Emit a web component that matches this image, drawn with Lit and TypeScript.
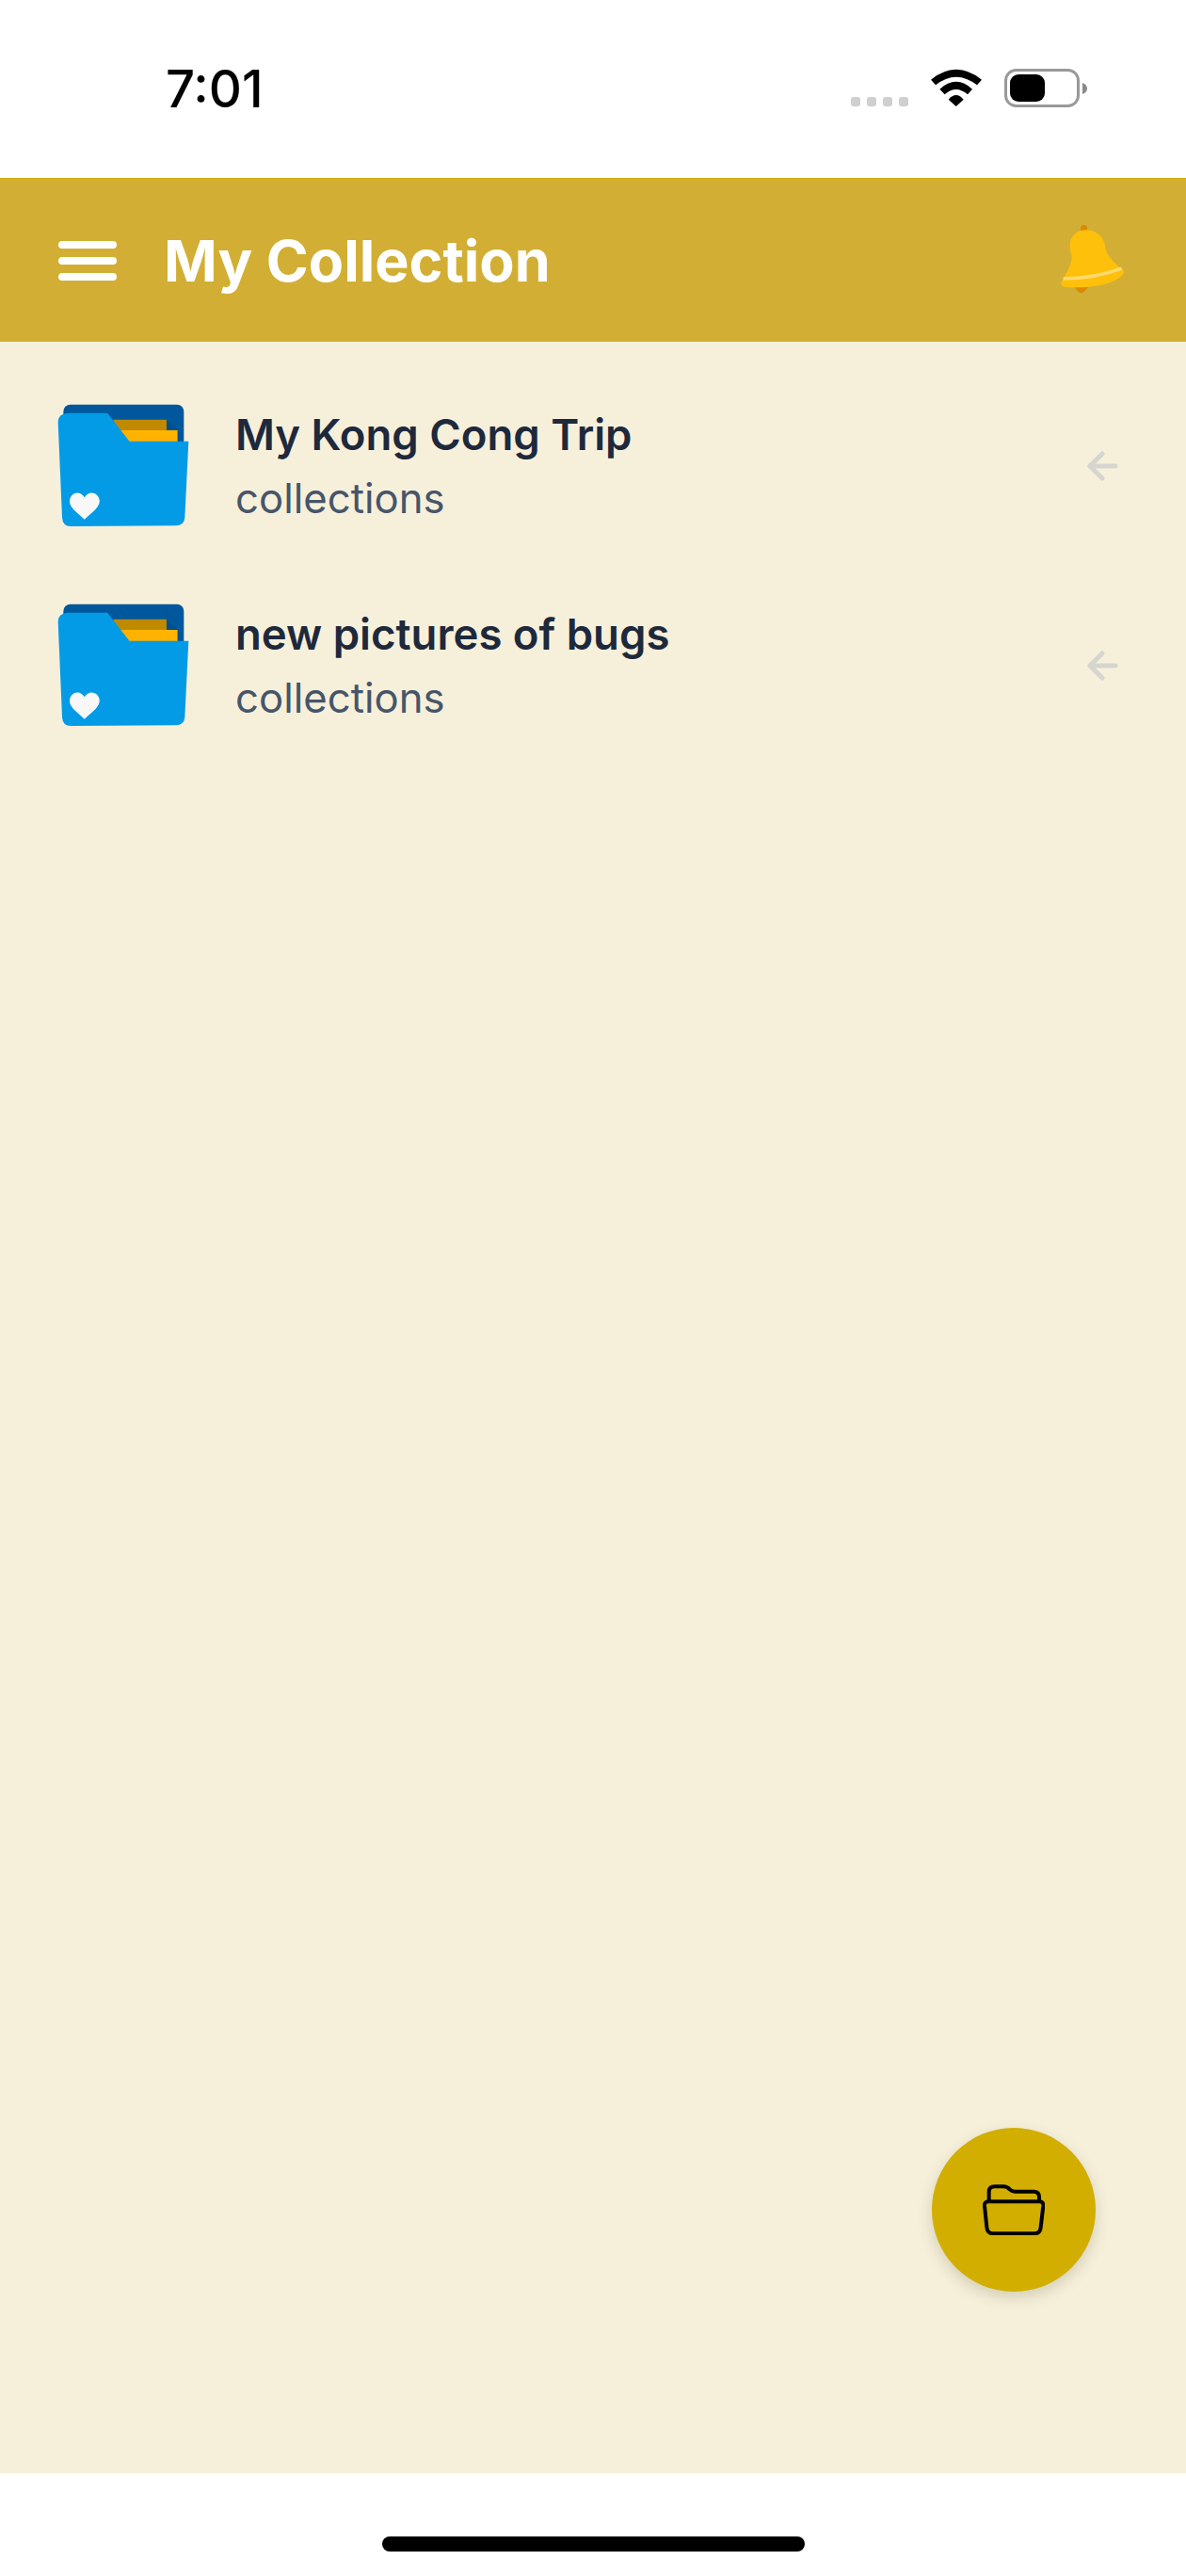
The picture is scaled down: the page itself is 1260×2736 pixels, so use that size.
import { LitElement, html, css, svg } from "lit";
import { customElement } from "lit/decorators.js";

const folder = svg`<svg class="folder" viewBox="60 50 425 395">
  <rect x="82" y="55" width="383" height="170" rx="22" fill="#01579b"/>
  <path d="M240 103H410L450 140V180H280Z" fill="#014f8e"/>
  <path d="M240 103H410V170H270Z" fill="#bf8a00"/>
  <path d="M262 137H445V178H290Z" fill="#ffb300"/>
  <path d="M65 112Q65 84 95 82L222 82L292 172L480 172L468 415Q465 440 440 440L105 442Q80 442 78 415Z" fill="#039be5"/>
  <path d="M149 420C120 395 100 380 102 360C104 335 135 325 149 350C163 325 195 335 197 360C198 380 178 395 149 420Z" fill="#f8f8f8"/>
</svg>`;

const arrow = svg`<svg class="arrow" viewBox="0 0 36 34" fill="none" stroke="#d6d5cf" stroke-width="5" stroke-linecap="round" stroke-linejoin="round">
  <path d="M31 17H4"/><path d="M17 4L4 17L17 30"/>
</svg>`;

@customElement("app-root")
export class AppRoot extends LitElement {
  static styles = css`
    :host {
      display: block;
      width: 1260px;
      height: 2736px;
      background: #fff;
      font-family: Inter, "Liberation Sans", sans-serif;
    }
    .page {
      display: flex;
      flex-direction: column;
      height: 2736px;
    }
    .status {
      height: 189px;
      flex: none;
      display: flex;
      align-items: flex-start;
      justify-content: space-between;
      background: #fff;
      box-sizing: border-box;
      padding: 0 105px 0 176px;
    }
    .time {
      font-size: 54.5px;
      line-height: 60px;
      margin-top: 64px;
      font-weight: 500;
      color: #000;
    }
    .indicators {
      display: flex;
      align-items: flex-start;
      padding-top: 73px;
    }
    .dots {
      display: flex;
      gap: 7px;
      margin-top: 30px;
      margin-right: 24px;
    }
    .dots i {
      width: 10px;
      height: 10px;
      border-radius: 3px;
      background: #cfcfcf;
    }
    .wifi {
      width: 54px;
      height: 40px;
      margin-right: 24px;
    }
    .battery {
      width: 88px;
      height: 42px;
    }
    .header {
      height: 174px;
      flex: none;
      box-sizing: border-box;
      background: #d2af34;
      border-top: 1px solid #d4aa00;
      display: flex;
      align-items: center;
      padding: 0 65px 0 62px;
    }
    .menu {
      width: 62px;
      display: flex;
      flex-direction: column;
      gap: 9px;
      margin-right: 50px;
    }
    .menu i {
      height: 8px;
      border-radius: 4px;
      background: #fff;
    }
    .title {
      flex: 1;
      font-size: 61px;
      line-height: 72px;
      font-weight: 700;
      color: #fff;
    }
    .bell {
      width: 68px;
      height: 77px;
    }
    .main {
      flex: 1;
      position: relative;
      background: #f6f0db;
      padding-top: 65px;
      box-sizing: border-box;
    }
    .row {
      display: flex;
      align-items: center;
      height: 132px;
      margin-bottom: 80px;
      padding: 0 70px 0 60px;
    }
    .folder {
      width: 142px;
      height: 132px;
      flex: none;
      margin-right: 48px;
    }
    .texts {
      flex: 1;
      align-self: flex-start;
      padding-top: 1px;
    }
    .name {
      font-size: 45.5px;
      line-height: 66px;
      font-weight: 600;
      color: #1e293b;
    }
    .sub {
      font-size: 43.7px;
      line-height: 69px;
      font-weight: 400;
      color: #475569;
    }
    .arrow {
      width: 36px;
      height: 34px;
      margin-top: 2px;
    }
    .fab {
      position: absolute;
      right: 96px;
      bottom: 193px;
      width: 174px;
      height: 174px;
      border-radius: 50%;
      background: #d1ae00;
      box-shadow: 0 6px 16px rgba(60, 50, 0, 0.18);
      display: flex;
      align-items: center;
      justify-content: center;
    }
    .fab svg {
      width: 66px;
      height: 54px;
    }
    .bottom {
      height: 109px;
      flex: none;
      background: #fff;
      display: flex;
      justify-content: center;
      padding-top: 67px;
      box-sizing: border-box;
    }
    .home {
      width: 449px;
      height: 16px;
      border-radius: 8px;
      background: #000;
    }
  `;

  render() {
    const rows = ["My Kong Cong Trip", "new pictures of bugs"];
    return html`<div class="page">
      <div class="status">
        <div class="time">7:01</div>
        <div class="indicators">
          <div class="dots"><i></i><i></i><i></i><i></i></div>
          <svg class="wifi" viewBox="390 100 162 120">
            <path d="M390 135Q470 70 552 135L537 152Q470 100 405 152Z"/>
            <path d="M418 165Q470 118 522 165L507 182Q470 150 434 182Z"/>
            <path d="M446 198Q470 170 494 198L470 220Z"/>
          </svg>
          <svg class="battery" viewBox="0 0 88 42">
            <rect x="1.5" y="1.5" width="77" height="38" rx="11" fill="#fff" stroke="#999" stroke-width="3"/>
            <rect x="6" y="6" width="37" height="29" rx="9" fill="#000"/>
            <path d="M83 15Q88 17 88 21Q88 25 83 27Z" fill="#8a8a8a"/>
          </svg>
        </div>
      </div>
      <div class="header">
        <div class="menu"><i></i><i></i><i></i></div>
        <div class="title">My Collection</div>
        <svg class="bell" viewBox="800 590 205 230">
          <ellipse cx="874" cy="605" rx="11" ry="13" fill="#d98a00"/>
          <path d="M843 788Q866 834 891 783Z" fill="#d98a00"/>
          <path d="M830 650C832 625 855 608 880 608C915 608 938 630 942 660C945 685 960 705 1003 740Q1000 760 960 775C920 790 860 795 812 790Q800 788 802 775C820 745 838 710 835 690C830 675 829 665 830 650Z" fill="#ffc00b"/>
          <path d="M808 763Q900 765 995 731" fill="none" stroke="#ffdb70" stroke-width="10"/>
        </svg>
      </div>
      <div class="main">
        ${rows.map(
          (r) => html`<div class="row">
            ${folder}
            <div class="texts">
              <div class="name">${r}</div>
              <div class="sub">collections</div>
            </div>
            ${arrow}
          </div>`
        )}
        <div class="fab">
          <svg viewBox="252 268 198 162" fill="none" stroke="#000" stroke-width="12" stroke-linecap="round" stroke-linejoin="round">
            <path d="M272 320V292Q272 275 290 275H318Q330 275 338 284Q345 291 356 291H415Q432 291 432 308V320"/>
            <path d="M270 323H434Q446 323 445 337L437 405Q435 425 417 425H285Q267 425 265 405L258 337Q257 323 270 323Z"/>
          </svg>
        </div>
      </div>
      <div class="bottom"><div class="home"></div></div>
    </div>`;
  }
}
